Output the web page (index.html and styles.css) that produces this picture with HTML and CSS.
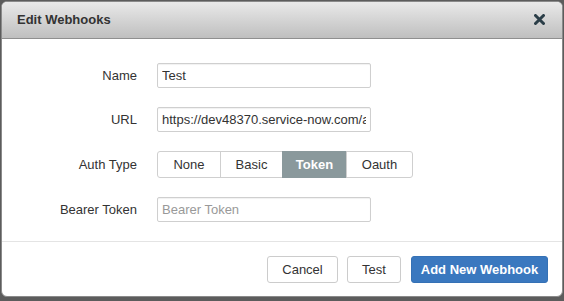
FILE: index.html
```html
<!DOCTYPE html>
<html>
<head>
<meta charset="utf-8">
<link rel="stylesheet" href="styles.css">
</head>
<body>
<div class="modal">
  <div class="modal-header">
    <span class="modal-title">Edit Webhooks</span>
    <svg class="close" width="11" height="11" viewBox="0 0 11 11"><path d="M1.5 1.5 L9.5 9.5 M9.5 1.5 L1.5 9.5" stroke="#2b3e48" stroke-width="3" stroke-linecap="round"/></svg>
  </div>
  <div class="modal-body">
    <div class="form">
      <label class="lbl">Name</label>
      <div class="field"><input class="input" type="text" value="Test"></div>
      <label class="lbl">URL</label>
      <div class="field"><input class="input" type="text" value="https://dev48370.service-now.com/api/x_webhook"></div>
      <label class="lbl">Auth Type</label>
      <div class="field">
        <div class="btn-group">
          <span class="seg seg-none">None</span>
          <span class="seg seg-basic">Basic</span>
          <span class="seg seg-token active">Token</span>
          <span class="seg seg-oauth">Oauth</span>
        </div>
      </div>
      <label class="lbl">Bearer Token</label>
      <div class="field"><input class="input" type="text" placeholder="Bearer Token"></div>
    </div>
  </div>
  <div class="modal-footer">
    <button class="btn btn-cancel">Cancel</button>
    <button class="btn btn-test">Test</button>
    <button class="btn btn-primary">Add New Webhook</button>
  </div>
</div>
</body>
</html>
```
FILE: styles.css
```css
* { box-sizing: border-box; }
html, body { margin: 0; padding: 0; }
body {
  width: 564px;
  height: 301px;
  background: #5c5c5c;
  font-family: "Liberation Sans", Arial, sans-serif;
  font-size: 13px;
  color: #333;
  overflow: hidden;
}
.modal {
  margin: 1px 1px 0 1px;
  width: 562px;
  height: 296px;
  background: #fff;
  border: 1px solid #8a8a8a;
  border-radius: 6px;
  display: flex;
  flex-direction: column;
  overflow: hidden;
}
.modal-header {
  height: 37px;
  flex: none;
  background: linear-gradient(#e9e9e9, #bfbfbf);
  border-bottom: 1px solid #8f8f8f;
  display: flex;
  align-items: center;
  justify-content: space-between;
  padding: 0 17px 0 15px;
}
.modal-title {
  font-weight: bold;
  font-size: 13px;
  color: #333;
  margin-top: -1px;
}
.close { display: block; margin-top: -1px; }
.modal-body {
  height: 202px;
  flex: none;
  padding-top: 24px;
}
.form {
  display: grid;
  grid-template-columns: 135px 255px;
  column-gap: 20px;
  row-gap: 19px;
  align-items: center;
}
.lbl {
  text-align: right;
  color: #333;
  font-size: 13px;
}
.field { display: flex; }
.input {
  width: 214px;
  height: 25px;
  border: 1px solid #cfcfcf;
  border-radius: 2px;
  padding: 0 4px;
  font-family: "Liberation Sans", Arial, sans-serif;
  font-size: 13px;
  color: #333;
  box-shadow: inset 0 1px 1px rgba(0,0,0,0.06);
  outline: none;
}
.input::placeholder { color: #999; }
.btn-group {
  display: flex;
  height: 27px;
}
.seg {
  display: flex;
  align-items: center;
  justify-content: center;
  border: 1px solid #cfcfcf;
  margin-left: -1px;
  color: #333;
  font-size: 13px;
  background: #fff;
}
.seg-none { width: 64px; margin-left: 0; border-radius: 3px 0 0 3px; }
.seg-basic { width: 63px; }
.seg-token { width: 65px; }
.seg-oauth { width: 67px; border-radius: 0 3px 3px 0; }
.seg.active {
  background: #8a999c;
  border-color: #8a999c;
  color: #fff;
  font-weight: bold;
}
.modal-footer {
  flex: 1;
  border-top: 1px solid #e4e4e4;
  display: flex;
  justify-content: flex-end;
  align-items: flex-start;
  padding: 14px 14px 0 0;
}
.btn {
  height: 27px;
  border: 1px solid #cccccc;
  border-radius: 3px;
  background: #fff;
  font-family: "Liberation Sans", Arial, sans-serif;
  font-size: 13px;
  color: #333;
  padding: 0;
}
.btn-cancel { width: 71px; }
.btn-test { width: 54px; margin-left: 9px; }
.btn-primary {
  width: 137px;
  margin-left: 10px;
  background: #3a78bf;
  border-color: #3571b5;
  color: #fff;
  font-weight: bold;
}
```
